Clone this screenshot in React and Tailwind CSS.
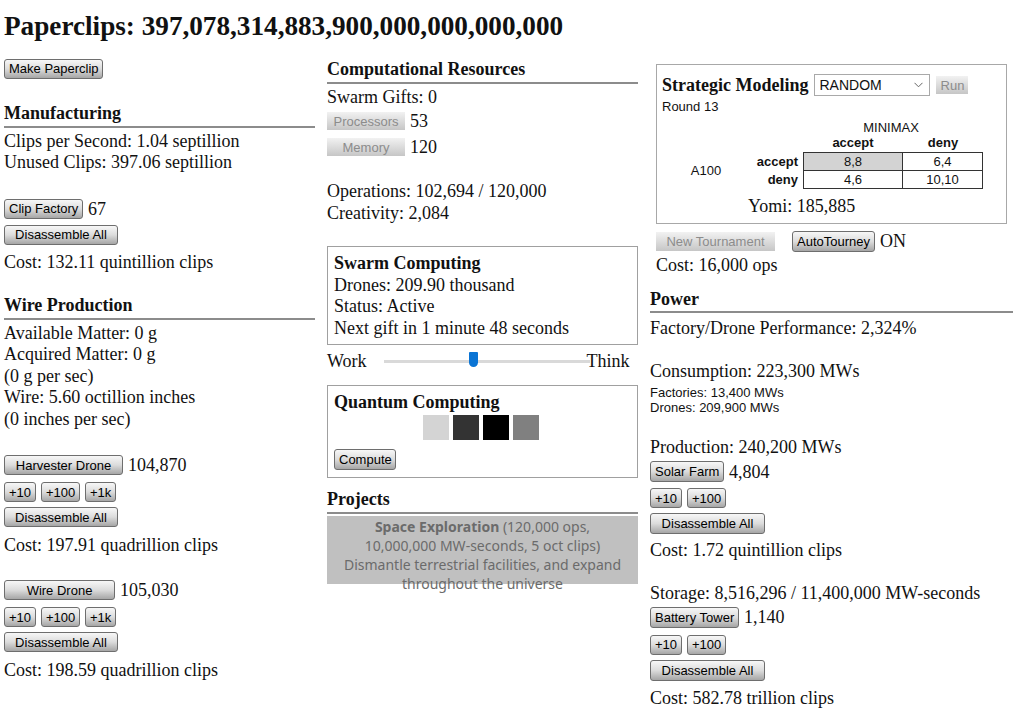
import React from "react";

const serif = "font-['Liberation_Serif',serif]";
const sans = "font-['Liberation_Sans',Arial,sans-serif]";

function Btn({ children, className = "" }) {
  return (
    <button
      className={`h-[20px] px-[4px] border border-[#6e6e6e] rounded-[3px] bg-linear-to-b from-[#f7f7f7] via-[#dcdcdc] to-[#a6a6a6] text-[13px] leading-none text-black whitespace-nowrap ${sans} ${className}`}
    >
      {children}
    </button>
  );
}

function OffBtn({ children, className = "" }) {
  return (
    <button
      className={`h-[18px] px-[4px] bg-linear-to-b from-[#f2f2f2] to-[#c6c6c6] text-[13px] leading-none text-[#8c8c8c] whitespace-nowrap ${sans} ${className}`}
    >
      {children}
    </button>
  );
}

function Heading({ children, className = "" }) {
  return (
    <div className={`font-bold leading-[21.5px] border-b-2 border-[#8c8c8c] pb-[1px] ${className}`}>
      {children}
    </div>
  );
}

function Line({ children, className = "" }) {
  return <div className={`leading-[21.5px] ${className}`}>{children}</div>;
}

function Count({ children }) {
  return <span className="ml-[5px] leading-[20px]">{children}</span>;
}

function Steps({ big = true, className = "" }) {
  return (
    <div className={`flex gap-[5px] ${className}`}>
      <Btn className="w-[32px]">+10</Btn>
      <Btn className="w-[39px]">+100</Btn>
      {big && <Btn className="w-[31px]">+1k</Btn>}
    </div>
  );
}

function Manufacturing() {
  return (
    <div className="w-[311px]">
      <Btn className="w-[99px]">Make Paperclip</Btn>
      <Heading className="mt-[22px]">Manufacturing</Heading>
      <Line className="mt-[3px]">Clips per Second: 1.04 septillion</Line>
      <Line>Unused Clips: 397.06 septillion</Line>

      <div className="flex items-center mt-[25px]">
        <Btn className="w-[79px]">Clip Factory</Btn>
        <Count>67</Count>
      </div>
      <Btn className="w-[114px] mt-[6px]">Disassemble All</Btn>
      <Line className="mt-[5px]">Cost: 132.11 quintillion clips</Line>

      <Heading className="mt-[21.5px]">Wire Production</Heading>
      <Line className="mt-[3px]">Available Matter: 0 g</Line>
      <Line>Acquired Matter: 0 g</Line>
      <Line>(0 g per sec)</Line>
      <Line>Wire: 5.60 octillion inches</Line>
      <Line>(0 inches per sec)</Line>

      <div className="flex items-center mt-[25px]">
        <Btn className="w-[119px]">Harvester Drone</Btn>
        <Count>104,870</Count>
      </div>
      <Steps className="mt-[7px]" />
      <Btn className="w-[114px] mt-[5px]">Disassemble All</Btn>
      <Line className="mt-[5px]">Cost: 197.91 quadrillion clips</Line>

      <div className="flex items-center mt-[24px]">
        <Btn className="w-[111px]">Wire Drone</Btn>
        <Count>105,030</Count>
      </div>
      <Steps className="mt-[7px]" />
      <Btn className="w-[114px] mt-[5px]">Disassemble All</Btn>
      <Line className="mt-[5px]">Cost: 198.59 quadrillion clips</Line>
    </div>
  );
}

function Computing() {
  const qubits = ["bg-[#d4d4d4]", "bg-[#333333]", "bg-[#000000]", "bg-[#808080]"];
  return (
    <div className="w-[311px] mt-[5px]">
      <Heading>Computational Resources</Heading>
      <Line className="mt-[3px]">Swarm Gifts: 0</Line>
      <div className="flex items-center mt-[3px]">
        <OffBtn className="w-[78px]">Processors</OffBtn>
        <Count>53</Count>
      </div>
      <div className="flex items-center mt-[6px]">
        <OffBtn className="w-[78px]">Memory</OffBtn>
        <Count>120</Count>
      </div>
      <Line className="mt-[24px]">Operations: 102,694 / 120,000</Line>
      <Line>Creativity: 2,084</Line>

      <div className="mt-[22px] border border-[#a0a0a0] pt-[6px] pb-[5px] px-[6px]">
        <Line className="font-bold">Swarm Computing</Line>
        <Line>Drones: 209.90 thousand</Line>
        <Line>Status: Active</Line>
        <Line>Next gift in 1 minute 48 seconds</Line>
      </div>

      <div className="flex items-center h-[21.5px] mt-[6px]">
        <span>Work</span>
        <div className="relative ml-[17px] w-[206px] h-[3px] bg-[#d9d9d9]">
          <div className="absolute left-[85px] -top-[8px] w-[9px] h-[15px] bg-[#0a74d4] rounded-b-[5px] rounded-t-[1px]" />
        </div>
        <span className="-ml-[3px]">Think</span>
      </div>

      <div className="mt-[12px] border border-[#a0a0a0] pt-[6px] pb-[5px] px-[6px]">
        <Line className="font-bold">Quantum Computing</Line>
        <div className="flex justify-center gap-[4px] mt-[2px] pr-[3px]">
          {qubits.map((c, i) => (
            <div key={i} className={`w-[26px] h-[25px] ${c}`} />
          ))}
        </div>
        <Btn className="w-[62px] h-[21px] mt-[9px]">Compute</Btn>
      </div>

      <Heading className="mt-[11px]">Projects</Heading>
      <div className="mt-[2px] h-[68px] bg-[#c0c0c0] text-[#6b6b6b] text-center text-[14px] leading-[19px] pt-[1px] font-['Noto_Sans',sans-serif]">
        <span className="font-bold">Space Exploration</span> (120,000 ops,
        <br />
        10,000,000 MW-seconds, 5 oct clips)
        <br />
        Dismantle terrestrial facilities, and expand
        <br />
        throughout the universe
      </div>
    </div>
  );
}

function Strategy() {
  return (
    <div className="ml-[6px]">
      <div className="w-[351px] h-[160px] border border-[#a8a8a8] pt-[9px] px-[5px]">
        <div className="flex items-center h-[22px]">
          <span className="font-bold">Strategic Modeling</span>
          <div
            className={`ml-[6px] w-[116px] h-[22px] border border-[#a9a9a9] bg-white flex items-center justify-between pl-[4px] pr-[6px] text-[14px] ${sans}`}
          >
            <span>RANDOM</span>
            <svg width="9" height="6" viewBox="0 0 9 6" fill="none" stroke="#666" strokeWidth="1">
              <path d="M0.5 0.8 L4.5 4.8 L8.5 0.8" />
            </svg>
          </div>
          <OffBtn className="ml-[6px] w-[32px]">Run</OffBtn>
        </div>
        <div className={`text-[13px] leading-[15px] mt-[3px] ${sans}`}>Round 13</div>

        <div className={`grid grid-cols-[88px_53px_100px_80px] text-[13px] leading-[15px] mt-[6px] ${sans}`}>
          <div />
          <div />
          <div className="col-span-2 text-center pr-[4px]">MINIMAX</div>
          <div />
          <div />
          <div className="text-center font-bold pb-[2px]">accept</div>
          <div className="text-center font-bold pb-[2px]">deny</div>

          <div className="row-span-2 flex items-center justify-center">A100</div>
          <div className="text-right pr-[5px] font-bold h-[19px] leading-[19px]">accept</div>
          <div className="h-[19px] leading-[18px] text-center bg-[#d3d3d3] border border-[#333]">8,8</div>
          <div className="h-[19px] leading-[18px] text-center border border-l-0 border-[#333]">6,4</div>
          <div className="text-right pr-[5px] font-bold h-[18px] leading-[18px]">deny</div>
          <div className="h-[18px] leading-[17px] text-center border border-t-0 border-[#333]">4,6</div>
          <div className="h-[18px] leading-[17px] text-center border border-t-0 border-l-0 border-[#333]">10,10</div>
        </div>

        <Line className="ml-[86px] mt-[7px]">Yomi: 185,885</Line>
      </div>

      <div className="flex items-center mt-[7px] h-[21px]">
        <OffBtn className="w-[119px] h-[19px]">New Tournament</OffBtn>
        <Btn className="ml-[17px] w-[83px] h-[21px]">AutoTourney</Btn>
        <span className="ml-[5px]">ON</span>
      </div>
      <Line className="mt-[3px]">Cost: 16,000 ops</Line>
    </div>
  );
}

function Power() {
  return (
    <div>
      <Heading className="mt-[12px]">Power</Heading>
      <Line className="mt-[5px]">Factory/Drone Performance: 2,324%</Line>
      <Line className="mt-[21.5px]">Consumption: 223,300 MWs</Line>
      <div className={`text-[13px] leading-[15px] mt-[2px] ${sans}`}>
        <div>Factories: 13,400 MWs</div>
        <div>Drones: 209,900 MWs</div>
      </div>

      <Line className="mt-[22px]">Production: 240,200 MWs</Line>
      <div className="flex items-center mt-[3px]">
        <Btn className="w-[74px] h-[21px]">Solar Farm</Btn>
        <Count>4,804</Count>
      </div>
      <Steps big={false} className="mt-[6px]" />
      <Btn className="w-[115px] h-[21px] mt-[5px]">Disassemble All</Btn>
      <Line className="mt-[4px]">Cost: 1.72 quintillion clips</Line>

      <Line className="mt-[21.5px]">Storage: 8,516,296 / 11,400,000 MW-seconds</Line>
      <div className="flex items-center mt-[2px]">
        <Btn className="w-[89px] h-[21px]">Battery Tower</Btn>
        <Count>1,140</Count>
      </div>
      <Steps big={false} className="mt-[7px]" />
      <Btn className="w-[115px] h-[21px] mt-[5px]">Disassemble All</Btn>
      <Line className="mt-[5px]">Cost: 582.78 trillion clips</Line>
    </div>
  );
}

export default function App() {
  return (
    <div className={`min-h-[712px] bg-white text-[#111] text-[18px] ${serif} pl-[4px]`}>
      <h1 className="text-[27.2px] font-bold leading-[32px] pt-[10px]">
        Paperclips: 397,078,314,883,900,000,000,000,000
      </h1>
      <div className="flex gap-[12px] mt-[12px]">
        <Manufacturing />
        <Computing />
        <div className="w-[363px] mt-[10px]">
          <Strategy />
          <Power />
        </div>
      </div>
    </div>
  );
}
